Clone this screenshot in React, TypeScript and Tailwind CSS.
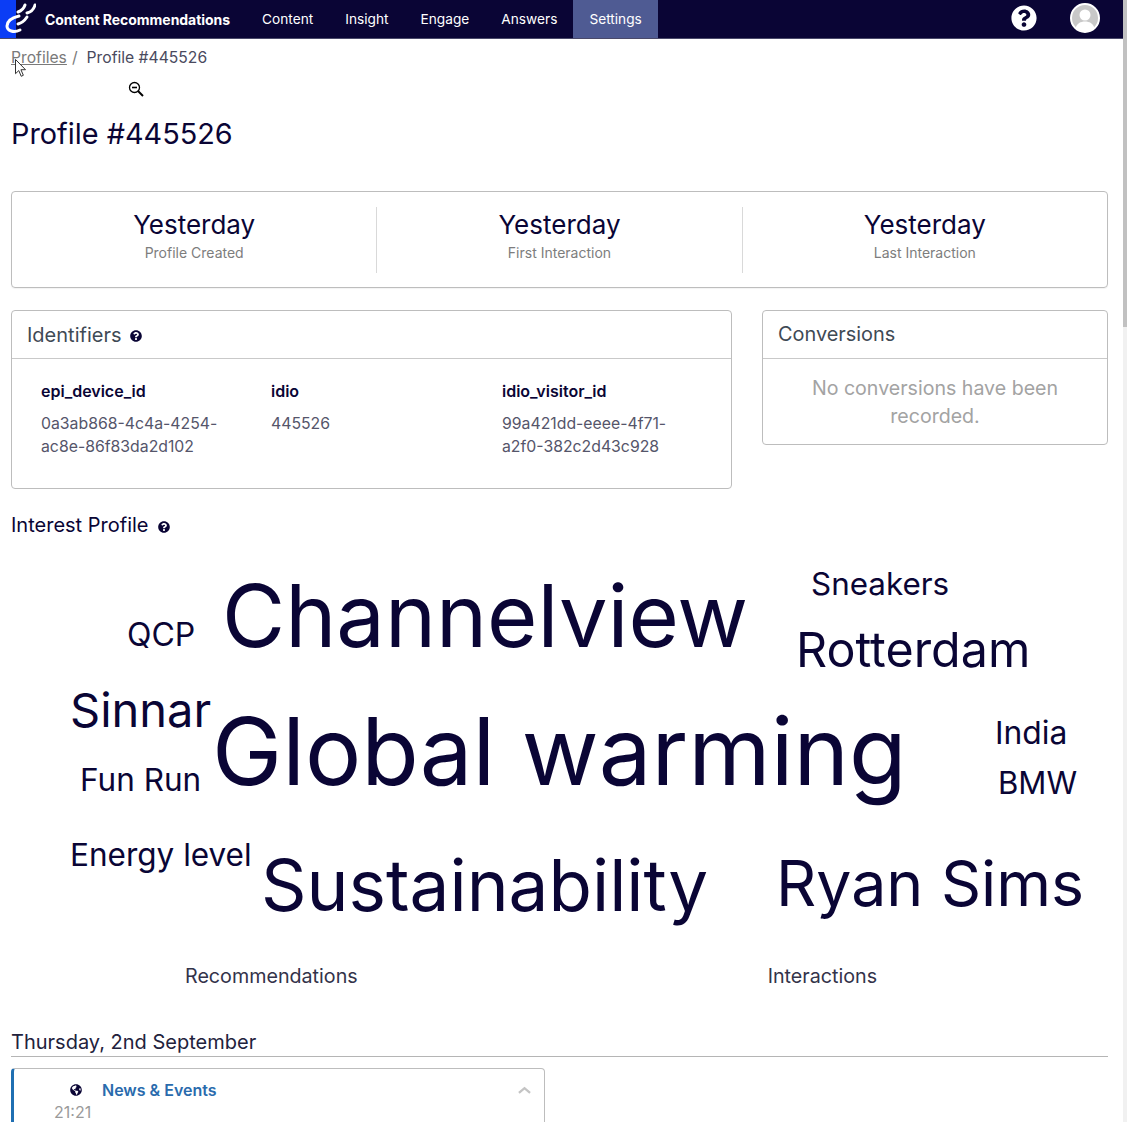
import { FaGlobeAmericas, FaQuestionCircle } from "react-icons/fa";

const navItems = ["Content", "Insight", "Engage", "Answers"];

const stats = [
  { value: "Yesterday", label: "Profile Created" },
  { value: "Yesterday", label: "First Interaction" },
  { value: "Yesterday", label: "Last Interaction" },
];

const identifiers = [
  { name: "epi_device_id", value: "0a3ab868-4c4a-4254-ac8e-86f83da2d102", cls: "w-[230px]" },
  { name: "idio", value: "445526", cls: "w-[231px]" },
  { name: "idio_visitor_id", value: "99a421dd-eeee-4f71-a2f0-382c2d43c928", cls: "w-[200px]" },
];

const words = [
  { text: "Channelview", cls: "left-[222px] top-[25px] text-[86.5px]" },
  { text: "Sneakers", cls: "left-[811px] top-[27px] text-[31.4px]" },
  { text: "QCP", cls: "left-[127px] top-[77px] text-[32px]" },
  { text: "Rotterdam", cls: "left-[796px] top-[82px] text-[48.4px]" },
  { text: "Sinnar", cls: "left-[70px] top-[143px] text-[47px]" },
  { text: "Global warming", cls: "left-[212px] top-[156px] text-[94px]" },
  { text: "India", cls: "left-[995px] top-[175px] text-[31.8px]" },
  { text: "Fun Run", cls: "left-[80px] top-[222px] text-[31.5px]" },
  { text: "BMW", cls: "left-[998px] top-[226px] text-[31.1px]" },
  { text: "Energy level", cls: "left-[70px] top-[297px] text-[31.5px]" },
  { text: "Sustainability", cls: "left-[261px] top-[304px] text-[71px]" },
  { text: "Ryan Sims", cls: "left-[776px] top-[307px] text-[62.6px]" },
];

function Logo() {
  return (
    <div className="relative h-[38px] w-[36px] shrink-0 overflow-hidden">
      <div className="absolute inset-y-0 left-0 w-[16px] bg-[#0b3df5]" />
      <svg viewBox="0 0 36 38" className="absolute inset-0 h-full w-full" fill="none" stroke="#fff" strokeLinecap="round">
        <path d="M19 16 C11 18 7 22 7 26 C7 31 14 33 20 30" strokeWidth="3" />
        <path d="M18 24 C22 23 25 20 27 17" strokeWidth="3" />
        <path d="M18 12 C21 11 24 8 25 5" strokeWidth="3" />
        <path d="M27 13 C31 12 34 9 35 5" strokeWidth="3" />
      </svg>
    </div>
  );
}

function Avatar() {
  return (
    <svg viewBox="0 0 30 30" className="h-[30px] w-[30px]">
      <circle cx="15" cy="15" r="14" fill="#c8c8c8" stroke="#fff" strokeWidth="2" />
      <circle cx="15" cy="12" r="5.5" fill="#fff" />
      <path d="M5.5 25c1.5-4.5 5-6.5 9.500-6.500s8 2 9.500 6.500c-2.500 2.300-5.800 3.500-9.500 3.500s-7-1.200-9.500-3.500z" fill="#fff" />
    </svg>
  );
}

function HelpSolid() {
  return (
    <span className="relative block h-[26px] w-[26px] rounded-full bg-[#0a0535]">
      <FaQuestionCircle className="h-[26px] w-[26px] text-white" />
    </span>
  );
}

export default function App() {
  return (
    <div className="flex h-[1122px] w-[1127px] overflow-hidden bg-white font-['Inter',sans-serif] text-[#0a0535]">
      <div className="w-[1123px] shrink-0">
        <header className="flex h-[39px] items-stretch border-b border-[#4a4a6a] bg-[#0a0535] text-[13.7px] text-white">
          <Logo />
          <span className="ml-[9px] self-center text-[14px] font-bold tracking-[-0.04px]">Content Recommendations</span>
          <nav className="ml-[16px] flex">
            {navItems.map((item) => (
              <a key={item} className="flex items-center px-[16px]">
                {item}
              </a>
            ))}
            <a className="flex items-center bg-[#4f5b93] px-[16px]">Settings</a>
          </nav>
          <div className="ml-auto flex items-center gap-[33px] pb-[2px] pr-[23px]">
            <HelpSolid />
            <Avatar />
          </div>
        </header>

        <main className="pl-[11px] pr-[15px]">
          <div className="relative flex h-[37px] items-center text-[15.7px] text-[#4a4a5e]">
            <a className="text-[#7a7a7a] underline">Profiles</a>
            <span className="ml-[5px] text-[#7a7a7a]">/</span>
            <span className="ml-[9px]">Profile #445526</span>
            <svg viewBox="0 0 9 14" className="absolute left-[3px] top-[19px] h-[20px] w-[13px]">
              <path d="M1 1v10l2.300-2.200 1.700 4 1.500-.7-1.700-3.900h3.200z" fill="#fff" stroke="#333" strokeWidth="0.7" />
            </svg>
            <svg viewBox="0 0 16 16" className="absolute left-[117px] top-[42px] h-[16px] w-[16px]" fill="none" stroke="#000">
              <circle cx="6.500" cy="6.500" r="5" strokeWidth="1.300" />
              <path d="M4 6.500h5" strokeWidth="1.600" />
              <path d="M10 10l5 5" strokeWidth="2" />
            </svg>
          </div>

          <h1 className="mt-[40px] text-[28.85px] leading-[36px] font-normal">Profile #445526</h1>

          <section className="mt-[39px] flex h-[97px] items-center rounded border border-[#bdbdbd] shadow-[0_1px_1px_rgba(0,0,0,0.05)]">
            {stats.map((s, i) => (
              <div key={s.label} className={`flex h-[66px] flex-1 flex-col items-center ${i > 0 ? "border-l border-[#d9d9d9]" : ""}`}>
                <div className="text-[26px] leading-[36px]">{s.value}</div>
                <div className="text-[14px] leading-[20px] text-[#7d7d7d]">{s.label}</div>
              </div>
            ))}
          </section>

          <div className="mt-[22px] flex items-start gap-[30px]">
            <section className="h-[179px] w-[721px] rounded border border-[#bdbdbd]">
              <div className="flex h-[48px] items-center gap-[9px] border-b border-[#c9c9c9] pl-[15px] text-[#3f4a55]">
                <span className="text-[20px]">Identifiers</span>
                <FaQuestionCircle className="mt-[2px] h-[12px] w-[12px] text-[#0a0535]" />
              </div>
              <div className="flex pl-[29px] pt-[22px]">
                {identifiers.map((id) => (
                  <div key={id.name} className={id.cls}>
                    <div className="text-[16px] leading-[20px] font-semibold">{id.name}</div>
                    <div className="mt-[11px] w-[190px] text-[15.8px] leading-[23px] text-[#55556a] [overflow-wrap:anywhere]">{id.value}</div>
                  </div>
                ))}
              </div>
            </section>
            <section className="h-[135px] flex-1 rounded border border-[#bdbdbd]">
              <div className="flex h-[48px] items-center border-b border-[#c9c9c9] pl-[15px] pt-[1px] text-[19.9px] text-[#3f4a55]">Conversions</div>
              <div className="px-[30px] pt-[15px] text-center text-[19.6px] leading-[28px] text-[#a3a3a3]">No conversions have been recorded.</div>
            </section>
          </div>

          <div className="mt-[22px] flex h-[28px] items-center gap-[9px] text-[20px]">
            <span>Interest Profile</span>
            <FaQuestionCircle className="mt-[3px] h-[12px] w-[12px]" />
          </div>
        </main>

        <div className="relative h-[422px]">
          {words.map((w) => (
            <span key={w.text} className={`absolute leading-[1.2] whitespace-nowrap ${w.cls}`}>
              {w.text}
            </span>
          ))}
        </div>

        <main className="pl-[11px] pr-[15px]">
          <div className="flex h-[28px] items-center pt-[4px] text-[19.7px] text-[#33334a]">
            <span className="ml-[174px]">Recommendations</span>
            <span className="ml-[410px]">Interactions</span>
          </div>
          <div className="mt-[39px] border-b border-[#b5b5b5] text-[20px] leading-[28px] text-[#22223c]">Thursday, 2nd September</div>
          <div className="mt-[11px] h-[80px] w-[534px] rounded border border-l-[3px] border-[#bdbdbd] border-l-[#1f6fb2]">
            <div className="flex items-center pl-[56px] pr-[13px] pt-[11px]">
              <FaGlobeAmericas className="h-[12px] w-[12px]" />
              <span className="ml-[20px] text-[16px] leading-[20px] font-semibold text-[#2a6bad]">News &amp; Events</span>
              <svg viewBox="0 0 14 8" className="ml-auto h-[8px] w-[13px]" fill="none" stroke="#c4c4c4" strokeWidth="2.500">
                <path d="M1 7l6-5 6 5" />
              </svg>
            </div>
            <div className="pl-[40px] pt-[1px] text-[16px] leading-[22px] text-[#9a9a9a]">21:21</div>
          </div>
        </main>
      </div>
      <div className="h-full flex-1 bg-[#f1f1f1]">
        <div className="h-[327px] bg-[#c1c1c1]" />
      </div>
    </div>
  );
}
